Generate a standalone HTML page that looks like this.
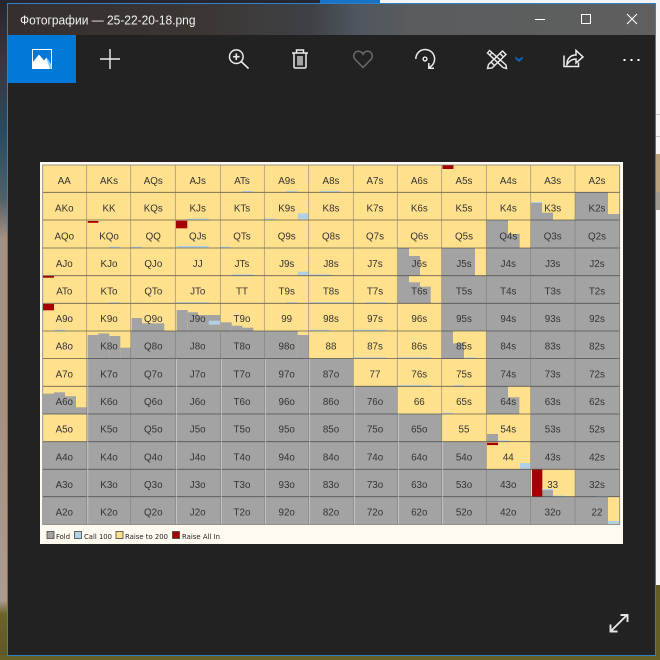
<!DOCTYPE html>
<html><head><meta charset="utf-8"><title>Фотографии</title>
<style>
html,body{margin:0;padding:0;width:660px;height:660px;overflow:hidden;background:#222}
svg{display:block;position:absolute;left:0;top:0}
.g text{font:9.8px "Liberation Sans",sans-serif;fill:#333;text-anchor:middle}
.l text{font:6.6px "DejaVu Sans",sans-serif;fill:#222}
</style></head><body>
<svg width="660" height="660" viewBox="0 0 660 660" xmlns="http://www.w3.org/2000/svg">
<defs>
<linearGradient id="lw" x1="0" y1="0" x2="0" y2="1">
<stop offset="0" stop-color="#26262f"/><stop offset=".09" stop-color="#3a3540"/><stop offset=".2" stop-color="#2c4a5a"/><stop offset=".3" stop-color="#50606a"/><stop offset=".36" stop-color="#a58f7e"/><stop offset=".6" stop-color="#a88f7c"/><stop offset=".91" stop-color="#b09a8a"/><stop offset=".93" stop-color="#6b6426"/><stop offset="1" stop-color="#5d5722"/>
</linearGradient>
<linearGradient id="tb" x1="0" y1="0" x2="1" y2="0">
<stop offset="0" stop-color="#35302f"/><stop offset=".3" stop-color="#3b3633"/><stop offset=".47" stop-color="#3f4146"/><stop offset=".54" stop-color="#4f565f"/><stop offset=".62" stop-color="#5a5c5d"/><stop offset="1" stop-color="#5f5f5f"/>
</linearGradient>
</defs>
<!-- wallpaper -->
<rect width="660" height="660" fill="url(#lw)"/>
<rect x="320" y="0" width="60" height="4" fill="#1773c8"/>
<rect x="380" y="0" width="280" height="4" fill="#f4f4f4"/>
<rect x="655" y="0" width="5" height="585" fill="#f6f6f6"/>
<rect x="655" y="114" width="5" height="1" fill="#c8c8c8"/>
<rect x="655" y="136" width="5" height="1" fill="#c8c8c8"/>
<rect x="655" y="154" width="5" height="56" fill="#b7a27c"/>
<rect x="655" y="192" width="5" height="18" fill="#9e9a92"/>
<rect x="655" y="585" width="5" height="75" fill="#655e24"/>
<rect x="0" y="655" width="660" height="5" fill="#676026"/>
<!-- window -->
<rect x="7.5" y="3.5" width="648" height="652" fill="#222" stroke="#2f82c4"/>
<rect x="8" y="4" width="647" height="31" fill="url(#tb)"/>
<text x="20" y="24.5" font-family="'Liberation Sans',sans-serif" font-size="12.5" fill="#f2f2f2" textLength="175.5" lengthAdjust="spacingAndGlyphs">Фотографии — 25-22-20-18.png</text>
<!-- caption buttons -->
<path d="M535 19.5H545" stroke="#fff" stroke-width="1"/>
<rect x="581.5" y="14.5" width="9" height="9" fill="none" stroke="#fff"/>
<path d="M627 14L637 24M637 14L627 24" stroke="#fff" stroke-width="1"/>
<!-- toolbar -->
<rect x="8" y="35" width="68" height="48" fill="#0078d7"/>
<rect x="32.5" y="49.5" width="19" height="19" fill="#0078d7" stroke="#fff"/>
<path d="M32 69V63L39 54.5L44 60.5L46.5 57.5L50 69Z" fill="#fff"/>
<path d="M47 57.5L51.5 65V69H50Z" fill="#9ccbf0"/>
<path d="M100 59H120M110 49V69" stroke="#eee" stroke-width="1.4" fill="none"/>
<g fill="none" stroke="#ececec" stroke-width="1.5">
<circle cx="236.3" cy="56.7" r="6.8"/>
<path d="M233 56.7H239.6M236.3 53.4V60" stroke-width="1.6"/>
<path d="M241.2 61.6L248.6 68.6" stroke-width="1.6"/>
<!-- trash -->
<path d="M292 53H308M296.5 52.5V50H303.5V52.5M294 53V66.5Q294 68 295.5 68H304.5Q306 68 306 66.5V53"/>
<path d="M298 56V65.5M300 56V65.5M302 56V65.5" stroke-width="1.3"/>
<!-- rotate -->
<path d="M415.8 59A9.4 9.4 0 1 1 429.4 67.3"/>
<circle cx="425" cy="59" r="1.9" stroke-width="1.4"/>
<path d="M428.8 63V68.2H434"/>
<!-- edit -->
<g stroke-width="1.4">
<path d="M489.5 50.5L487.5 53L503 67.5L506.5 68.5L506 65Z"/>
<path d="M487.5 68.5L488.5 64.5L502.5 51L506 54.5L492 68Z"/>
<path d="M491 62L494.5 65.5M500 53.5L503.5 57M492 52.5L490 55"/>
</g>
<!-- share -->
<path d="M564 55.5V66.5H578.5V62.5"/>
<path d="M567 64.5C567 58.5 570.5 55 576 55V50.5L583 57L576 63V59C572 59 569 61 567 64.5Z"/>
</g>
<!-- expand -->
<path d="M611 631L627 615M610.5 624.5V631.5H617.5M620.5 615H627.5V622" stroke="#e6e6e6" stroke-width="1.9" fill="none"/>
<path d="M363 67.5L355.3 59.6C352.4 56.6 354 51.3 358.4 51.3C360.4 51.3 362 52.4 363 54.2C364 52.4 365.6 51.3 367.6 51.3C372 51.3 373.6 56.6 370.7 59.6Z" fill="none" stroke="#6b6b6b" stroke-width="1.5"/>
<path d="M515.5 57.5L519 60.8L522.5 57.5" fill="none" stroke="#0a6cc4" stroke-width="1.7"/>
<rect x="623.5" y="59" width="2" height="2" fill="#fff"/><rect x="630.5" y="59" width="2" height="2" fill="#fff"/><rect x="637.5" y="59" width="2" height="2" fill="#fff"/>
<!-- picture -->
<rect x="40" y="162" width="583" height="382" fill="#fffaf0"/>
<g style="filter:blur(.35px)">
<rect x="42.7" y="165" width="577" height="359.5" fill="#ffe08c"/>
<g fill="#a3a3a3">
<rect x="531" y="202.3" width="11" height="18"/><rect x="542" y="212.7" width="11" height="8"/>
<rect x="575" y="192.3" width="33" height="28"/><rect x="608" y="214" width="11.7" height="6"/>
<rect x="486.3" y="220" width="21.7" height="28"/><rect x="508" y="234" width="11.7" height="14"/><rect x="530.7" y="220" width="89" height="28"/>
<rect x="397.8" y="248" width="11.2" height="27.7"/><rect x="409" y="256" width="11" height="19.7"/>
<rect x="441.7" y="248" width="33.3" height="27.7"/><rect x="486.3" y="248" width="133.4" height="27.7"/>
<rect x="397.8" y="275.7" width="11.2" height="27.6"/><rect x="409" y="282.3" width="11" height="21"/><rect x="420" y="286.7" width="10.7" height="16.6"/>
<rect x="441.7" y="275.7" width="178" height="55.3"/>
<rect x="131.7" y="318" width="10.3" height="13"/><rect x="142" y="323.3" width="22.3" height="7.7"/>
<rect x="176.7" y="310" width="11" height="21"/><rect x="187.7" y="312.3" width="10.3" height="18.7"/><rect x="198" y="315" width="22.3" height="16"/>
<rect x="221" y="322.3" width="10.7" height="8.7"/><rect x="231.7" y="325.7" width="10.6" height="5.3"/><rect x="242.3" y="327.7" width="11" height="3.3"/>
<rect x="87.7" y="335" width="10.7" height="24"/><rect x="98.3" y="333.4" width="10.9" height="25.6"/><rect x="109.2" y="336" width="11.1" height="23"/><rect x="120.3" y="347.7" width="10.7" height="11.3"/>
<rect x="131" y="331" width="166.7" height="28"/><rect x="297.7" y="335" width="11" height="24"/>
<rect x="441.7" y="331" width="11.3" height="28"/><rect x="453" y="343.3" width="11" height="15.7"/><rect x="486.3" y="331" width="133.4" height="28"/>
<rect x="87" y="358.5" width="266.3" height="28"/><rect x="486.3" y="358.5" width="133.4" height="28"/>
<rect x="43" y="393.7" width="11" height="20.5"/><rect x="54" y="392.3" width="11" height="22"/><rect x="65" y="396.3" width="11" height="18"/><rect x="76" y="407.3" width="11" height="7"/>
<rect x="87" y="386.3" width="310.3" height="28"/>
<rect x="486.3" y="386.3" width="21.7" height="28"/><rect x="508" y="397.3" width="11.3" height="17"/><rect x="530.7" y="386.3" width="89" height="28"/>
<rect x="87" y="414" width="354.7" height="28"/><rect x="487" y="434" width="11" height="7.7"/><rect x="530.7" y="414" width="89" height="28"/>
<rect x="42.7" y="441.7" width="443.6" height="27.7"/><rect x="530.7" y="441.7" width="89" height="27.7"/>
<rect x="42.7" y="469.3" width="488" height="27.5"/><rect x="575" y="469.3" width="44.7" height="27.5"/>
<rect x="542" y="490" width="11" height="7"/>
<rect x="42.7" y="496.7" width="565.3" height="27.8"/>
</g>
<g fill="#a40000">
<rect x="442.5" y="165" width="11" height="4"/>
<rect x="87.7" y="221" width="10.7" height="1.8"/>
<rect x="176" y="220.7" width="11.3" height="7.6"/>
<rect x="43" y="276" width="11" height="1.7"/>
<rect x="43" y="304" width="11" height="6.3"/>
<rect x="487" y="442.7" width="11" height="2.4"/>
<rect x="532" y="469.5" width="10.3" height="27.3"/>
</g>
<g fill="#b1d0e4">
<rect x="297.7" y="213.3" width="10.8" height="6"/>
<rect x="297.7" y="271.7" width="10.8" height="3.6"/>
<rect x="208.7" y="320.7" width="11.3" height="4"/>
<rect x="520" y="463" width="10.3" height="6"/>
<rect x="608" y="521" width="11.5" height="3"/>
<rect x="176.7" y="246" width="32" height="1.6"/>
<rect x="242" y="191" width="10.5" height="1.2"/><rect x="286" y="191" width="11" height="1.2"/><rect x="320" y="191" width="20" height="1.2"/>
<rect x="187" y="218.8" width="22" height="1.2"/><rect x="264.5" y="218.8" width="11" height="1.2"/>
<rect x="109" y="246.8" width="11" height="1.2"/><rect x="131" y="246.8" width="11" height="1.2"/><rect x="220.5" y="246.8" width="10.5" height="1.2"/>
<rect x="232" y="274.5" width="22" height="1.2"/><rect x="310" y="274.5" width="20" height="1.2"/>
<rect x="109" y="302.2" width="11" height="1.2"/><rect x="176" y="302.2" width="33" height="1.2"/><rect x="286" y="302.2" width="11" height="1.2"/><rect x="310" y="302.2" width="43" height="1.2"/><rect x="365" y="302.2" width="22" height="1.2"/>
<rect x="54" y="329.8" width="11" height="1.2"/><rect x="310" y="329.8" width="20" height="1.2"/><rect x="354" y="329.8" width="33" height="1.2"/>
<rect x="354" y="357.3" width="33" height="1.2"/><rect x="398" y="357.3" width="33" height="1.2"/><rect x="465" y="357.3" width="11" height="1.2"/>
<rect x="398" y="385.2" width="33" height="1.2"/><rect x="453" y="385.2" width="11" height="1.2"/>
<rect x="442" y="412.8" width="11" height="1.2"/>
<rect x="498" y="440.5" width="11" height="1.2"/>
<rect x="542" y="489" width="11" height="1.2"/><rect x="553" y="495.6" width="11" height="1.2"/>
<rect x="531" y="202" width="11" height="1"/>
<rect x="597" y="496" width="11" height="1"/>
</g>
<g stroke="#3f3f3f" stroke-width=".8" fill="none" opacity=".8">
<path d="M42.7 192.3H619.7M42.7 220H619.7M42.7 248H619.7M42.7 275.7H619.7M42.7 303.3H619.7M42.7 331H619.7M42.7 358.5H619.7M42.7 386.3H619.7M42.7 414H619.7M42.7 441.7H619.7M42.7 469.3H619.7M42.7 496.7H619.7"/>
</g>
<g stroke="#777" stroke-width=".7" fill="none" opacity=".75">
<path d="M86.7 165V524.5M130.7 165V524.5M175.3 165V524.5M220.3 165V524.5M264.3 165V524.5M308.7 165V524.5M353.3 165V524.5M397.3 165V524.5M441.7 165V524.5M486.3 165V524.5M530.7 165V524.5M575 165V524.5"/>
</g>
<g stroke="#e2e2e2" stroke-width=".7" fill="none" opacity=".75">
<path d="M87.8 359V524M176.3 359V524M221.3 359V524M265.3 359V524M309.7 359V524M354.3 386V524M398.3 414V524M442.7 442V524"/>
</g>
<rect x="42.7" y="165" width="577" height="359.5" fill="none" stroke="#808080" stroke-width=".8"/>
<g class="g">
<text x="64.3" y="184">AA</text><text x="109" y="184">AKs</text><text x="153.3" y="184">AQs</text><text x="197.7" y="184">AJs</text><text x="242" y="184">ATs</text><text x="286.7" y="184">A9s</text><text x="331" y="184">A8s</text><text x="375" y="184">A7s</text><text x="419.3" y="184">A6s</text><text x="464" y="184">A5s</text><text x="508.3" y="184">A4s</text><text x="552.7" y="184">A3s</text><text x="597" y="184">A2s</text>
<text x="64.3" y="211.7">AKo</text><text x="109" y="211.7">KK</text><text x="153.3" y="211.7">KQs</text><text x="197.7" y="211.7">KJs</text><text x="242" y="211.7">KTs</text><text x="286.7" y="211.7">K9s</text><text x="331" y="211.7">K8s</text><text x="375" y="211.7">K7s</text><text x="419.3" y="211.7">K6s</text><text x="464" y="211.7">K5s</text><text x="508.3" y="211.7">K4s</text><text x="552.7" y="211.7">K3s</text><text x="597" y="211.7">K2s</text>
<text x="64.3" y="239.3">AQo</text><text x="109" y="239.3">KQo</text><text x="153.3" y="239.3">QQ</text><text x="197.7" y="239.3">QJs</text><text x="242" y="239.3">QTs</text><text x="286.7" y="239.3">Q9s</text><text x="331" y="239.3">Q8s</text><text x="375" y="239.3">Q7s</text><text x="419.3" y="239.3">Q6s</text><text x="464" y="239.3">Q5s</text><text x="508.3" y="239.3">Q4s</text><text x="552.7" y="239.3">Q3s</text><text x="597" y="239.3">Q2s</text>
<text x="64.3" y="267">AJo</text><text x="109" y="267">KJo</text><text x="153.3" y="267">QJo</text><text x="197.7" y="267">JJ</text><text x="242" y="267">JTs</text><text x="286.7" y="267">J9s</text><text x="331" y="267">J8s</text><text x="375" y="267">J7s</text><text x="419.3" y="267">J6s</text><text x="464" y="267">J5s</text><text x="508.3" y="267">J4s</text><text x="552.7" y="267">J3s</text><text x="597" y="267">J2s</text>
<text x="64.3" y="294.5">ATo</text><text x="109" y="294.5">KTo</text><text x="153.3" y="294.5">QTo</text><text x="197.7" y="294.5">JTo</text><text x="242" y="294.5">TT</text><text x="286.7" y="294.5">T9s</text><text x="331" y="294.5">T8s</text><text x="375" y="294.5">T7s</text><text x="419.3" y="294.5">T6s</text><text x="464" y="294.5">T5s</text><text x="508.3" y="294.5">T4s</text><text x="552.7" y="294.5">T3s</text><text x="597" y="294.5">T2s</text>
<text x="64.3" y="322">A9o</text><text x="109" y="322">K9o</text><text x="153.3" y="322">Q9o</text><text x="197.7" y="322">J9o</text><text x="242" y="322">T9o</text><text x="286.7" y="322">99</text><text x="331" y="322">98s</text><text x="375" y="322">97s</text><text x="419.3" y="322">96s</text><text x="464" y="322">95s</text><text x="508.3" y="322">94s</text><text x="552.7" y="322">93s</text><text x="597" y="322">92s</text>
<text x="64.3" y="349.7">A8o</text><text x="109" y="349.7">K8o</text><text x="153.3" y="349.7">Q8o</text><text x="197.7" y="349.7">J8o</text><text x="242" y="349.7">T8o</text><text x="286.7" y="349.7">98o</text><text x="331" y="349.7">88</text><text x="375" y="349.7">87s</text><text x="419.3" y="349.7">86s</text><text x="464" y="349.7">85s</text><text x="508.3" y="349.7">84s</text><text x="552.7" y="349.7">83s</text><text x="597" y="349.7">82s</text>
<text x="64.3" y="377.7">A7o</text><text x="109" y="377.7">K7o</text><text x="153.3" y="377.7">Q7o</text><text x="197.7" y="377.7">J7o</text><text x="242" y="377.7">T7o</text><text x="286.7" y="377.7">97o</text><text x="331" y="377.7">87o</text><text x="375" y="377.7">77</text><text x="419.3" y="377.7">76s</text><text x="464" y="377.7">75s</text><text x="508.3" y="377.7">74s</text><text x="552.7" y="377.7">73s</text><text x="597" y="377.7">72s</text>
<text x="64.3" y="405">A6o</text><text x="109" y="405">K6o</text><text x="153.3" y="405">Q6o</text><text x="197.7" y="405">J6o</text><text x="242" y="405">T6o</text><text x="286.7" y="405">96o</text><text x="331" y="405">86o</text><text x="375" y="405">76o</text><text x="419.3" y="405">66</text><text x="464" y="405">65s</text><text x="508.3" y="405">64s</text><text x="552.7" y="405">63s</text><text x="597" y="405">62s</text>
<text x="64.3" y="432.7">A5o</text><text x="109" y="432.7">K5o</text><text x="153.3" y="432.7">Q5o</text><text x="197.7" y="432.7">J5o</text><text x="242" y="432.7">T5o</text><text x="286.7" y="432.7">95o</text><text x="331" y="432.7">85o</text><text x="375" y="432.7">75o</text><text x="419.3" y="432.7">65o</text><text x="464" y="432.7">55</text><text x="508.3" y="432.7">54s</text><text x="552.7" y="432.7">53s</text><text x="597" y="432.7">52s</text>
<text x="64.3" y="460.3">A4o</text><text x="109" y="460.3">K4o</text><text x="153.3" y="460.3">Q4o</text><text x="197.7" y="460.3">J4o</text><text x="242" y="460.3">T4o</text><text x="286.7" y="460.3">94o</text><text x="331" y="460.3">84o</text><text x="375" y="460.3">74o</text><text x="419.3" y="460.3">64o</text><text x="464" y="460.3">54o</text><text x="508.3" y="460.3">44</text><text x="552.7" y="460.3">43s</text><text x="597" y="460.3">42s</text>
<text x="64.3" y="488">A3o</text><text x="109" y="488">K3o</text><text x="153.3" y="488">Q3o</text><text x="197.7" y="488">J3o</text><text x="242" y="488">T3o</text><text x="286.7" y="488">93o</text><text x="331" y="488">83o</text><text x="375" y="488">73o</text><text x="419.3" y="488">63o</text><text x="464" y="488">53o</text><text x="508.3" y="488">43o</text><text x="552.7" y="488">33</text><text x="597" y="488">32s</text>
<text x="64.3" y="515.7">A2o</text><text x="109" y="515.7">K2o</text><text x="153.3" y="515.7">Q2o</text><text x="197.7" y="515.7">J2o</text><text x="242" y="515.7">T2o</text><text x="286.7" y="515.7">92o</text><text x="331" y="515.7">82o</text><text x="375" y="515.7">72o</text><text x="419.3" y="515.7">62o</text><text x="464" y="515.7">52o</text><text x="508.3" y="515.7">42o</text><text x="552.7" y="515.7">32o</text><text x="597" y="515.7">22</text>
</g>
<g class="l">
<rect x="47" y="531.5" width="7" height="7" fill="#a3a3a3" stroke="#444" stroke-width=".8"/>
<text x="56" y="538.8" textLength="14" lengthAdjust="spacingAndGlyphs">Fold</text>
<rect x="74.5" y="531.5" width="7" height="7" fill="#b1d0e4" stroke="#444" stroke-width=".8"/>
<text x="84" y="538.8" textLength="28" lengthAdjust="spacingAndGlyphs">Call 100</text>
<rect x="116" y="531.5" width="7" height="7" fill="#ffe08c" stroke="#444" stroke-width=".8"/>
<text x="125" y="538.8" textLength="43" lengthAdjust="spacingAndGlyphs">Raise to 200</text>
<rect x="172.5" y="531.5" width="7" height="7" fill="#a40000" stroke="#444" stroke-width=".8"/>
<text x="182" y="538.8" textLength="38" lengthAdjust="spacingAndGlyphs">Raise All In</text>
</g>
</g>
</svg>
</body></html>
